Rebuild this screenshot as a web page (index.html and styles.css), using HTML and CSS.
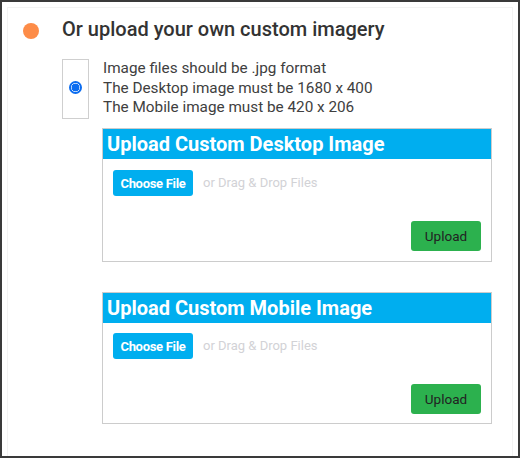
FILE: index.html
```html
<!DOCTYPE html>
<html>
<head>
<meta charset="utf-8">
<link rel="stylesheet" href="styles.css">
</head>
<body>
<div class="frame">
  <div class="inner">
    <div class="title-row">
      <span class="dot"></span>
      <h2 class="title">Or upload your own custom imagery</h2>
    </div>
    <div class="option">
      <div class="radio-box"><span class="radio"></span></div>
      <div class="info">
        <div>Image files should be .jpg format</div>
        <div>The Desktop image must be 1680 x 400</div>
        <div>The Mobile image must be 420 x 206</div>
      </div>
    </div>
    <div class="cards">
      <div class="card">
        <div class="card-head">Upload Custom Desktop Image</div>
        <div class="card-body">
          <div class="file-row">
            <span class="choose">Choose File</span>
            <span class="drop">or Drag &amp; Drop Files</span>
          </div>
          <div class="actions"><span class="upload">Upload</span></div>
        </div>
      </div>
      <div class="card">
        <div class="card-head">Upload Custom Mobile Image</div>
        <div class="card-body card-body-sm">
          <div class="file-row">
            <span class="choose">Choose File</span>
            <span class="drop">or Drag &amp; Drop Files</span>
          </div>
          <div class="actions"><span class="upload">Upload</span></div>
        </div>
      </div>
    </div>
  </div>
</div>
</body>
</html>
```

FILE: styles.css
```css
html, body {
  margin: 0;
  padding: 0;
  background: #fff;
}
.frame {
  width: 520px;
  height: 458px;
  box-sizing: border-box;
  border: 2px solid #3a3a3a;
  padding: 5px 5px 0 5px;
  font-family: Roboto, "Liberation Sans", sans-serif;
  overflow: hidden;
}
.inner {
  height: 100%;
  box-sizing: border-box;
  border: 1px solid #f3f3f3;
  border-bottom: none;
}
.title-row {
  display: flex;
  align-items: center;
  margin-top: 9px;
  height: 24px;
}
.dot {
  width: 16px;
  height: 16px;
  border-radius: 50%;
  background: #fd8c48;
  margin-left: 15px;
  margin-top: 4px;
  flex: none;
}
.title {
  margin: 0 0 0 23px;
  font-size: 20px;
  line-height: 24px;
  font-weight: 500;
  color: #333;
}
.option {
  display: flex;
  margin: 18px 0 0 54px;
}
.radio-box {
  width: 27px;
  height: 60px;
  box-sizing: border-box;
  border: 1px solid #cfcfcf;
  display: flex;
  align-items: center;
  justify-content: center;
  flex: none;
}
.radio {
  width: 13px;
  height: 13px;
  margin-top: -4px;
  box-sizing: border-box;
  border-radius: 50%;
  border: 2px solid #0b6cf0;
  background: radial-gradient(circle, #0b6cf0 0 3.6px, #fff 4.2px);
}
.info {
  margin-left: 14px;
  font-size: 15.3px;
  line-height: 19.5px;
  color: #404040;
}
.cards {
  margin: 9px 0 0 94px;
  display: flex;
  flex-direction: column;
  gap: 30px;
}
.card {
  width: 390px;
  box-sizing: border-box;
  border: 1px solid #cccccc;
}
.card-head {
  height: 30px;
  background: #00aeef;
  color: #fff;
  font-weight: 700;
  font-size: 20px;
  line-height: 30px;
  padding-left: 4px;
}
.card-body {
  padding: 11px 10px 10px 10px;
}
.card-body-sm {
  padding: 10px 10px 9px 10px;
}
.file-row {
  display: flex;
  align-items: center;
}
.choose {
  width: 80px;
  height: 26px;
  box-sizing: border-box;
  background: #00aeef;
  border-radius: 3px;
  color: #fff;
  font-weight: 700;
  font-size: 13px;
  letter-spacing: -0.3px;
  display: flex;
  align-items: center;
  justify-content: center;
}
.drop {
  margin-left: 10px;
  margin-top: -2px;
  font-size: 13px;
  color: #d2d2d6;
}
.actions {
  display: flex;
  justify-content: flex-end;
  margin-top: 25px;
}
.upload {
  width: 70px;
  height: 30px;
  background: #2cb14e;
  border-radius: 3px;
  color: #222;
  font-size: 13.5px;
  display: flex;
  align-items: center;
  justify-content: center;
}
```
